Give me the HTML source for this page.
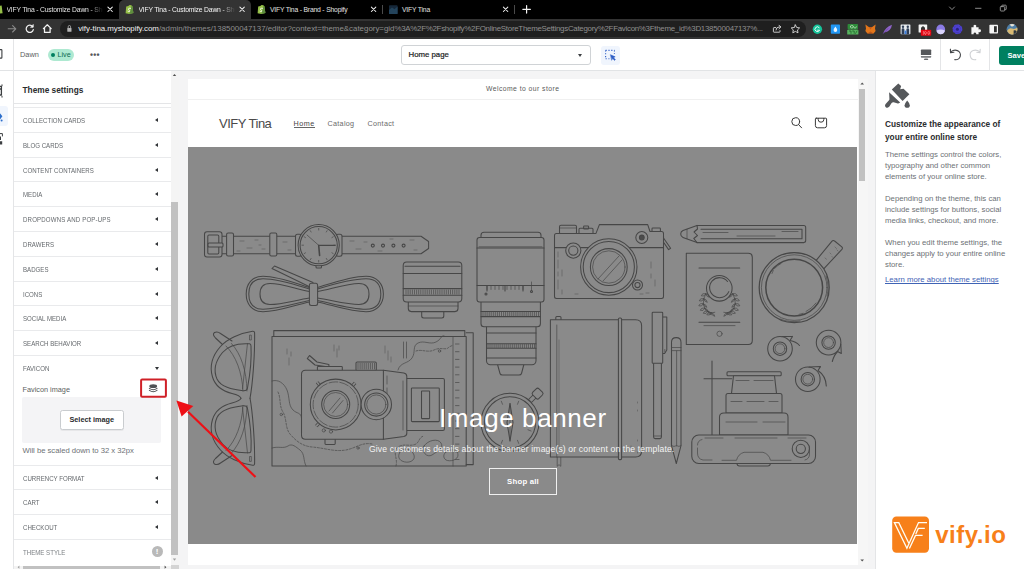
<!DOCTYPE html>
<html lang="en">
<head>
<meta charset="utf-8">
<title>VIFY Tina - Customize Dawn - Shopify</title>
<style>
*{box-sizing:border-box;margin:0;padding:0}
html,body{width:1024px;height:569px;overflow:hidden;background:#f4f4f5;font-family:"Liberation Sans","DejaVu Sans",sans-serif;color:#202223}
.abs,#root>div,#root>svg{position:absolute}
#root{position:relative;width:1024px;height:569px;overflow:hidden}
span.t{position:absolute;white-space:nowrap;display:block}
/* chrome */
#tabs{left:0;top:0;width:1024px;height:19px;background:#000}
#toolbar{left:0;top:18.5px;width:1024px;height:20.5px;background:#333}
#acttab{left:118.5px;top:0;width:132.5px;height:19px;background:#333;border-radius:5px 5px 0 0}
.tt{font-size:6.8px;line-height:19px;top:0;color:#e2e2e2;letter-spacing:-0.19px}
.tx{font-size:9px;line-height:19px;top:0;color:#f2f2f2;font-weight:bold}
.sep{width:1px;height:9px;top:5px;background:#4a4a4a}
#omni{left:60px;top:20.5px;width:746px;height:16.5px;border-radius:8.25px;background:#1f1f1f}
.url{left:78.2px;top:18.8px;height:20px;line-height:20px;font-size:7.9px;color:#8f8f8f;letter-spacing:-0.272px}
.url u{text-decoration:none;letter-spacing:0}
.url b{color:#f0f0f0;font-weight:normal;letter-spacing:-0.03px}
/* shopify top bar */
#topbar{left:0;top:39px;width:1024px;height:32px;background:#fff;border-bottom:1px solid #e1e3e5}
#rail{left:0;top:71px;width:14px;height:498px;background:#fff;border-right:1px solid #e4e5e7}
#side{left:14px;top:71px;width:156.5px;height:498px;background:#fff;overflow:hidden}
#sscroll{left:170.5px;top:71px;width:8.5px;height:498px;background:#f4f4f4}
#right{left:875px;top:71px;width:149px;height:498px;background:#fff;border-left:1px solid #e4e5e7}
#preview{left:188px;top:79px;width:670px;height:486px;background:#fff}
#pscroll{left:858px;top:79px;width:9.5px;height:486px;background:#f6f6f6}
#banner{left:188px;top:147px;width:669px;height:397px;background:#8a8a8a}
.row{position:absolute;left:0;width:157px;height:25px;border-top:1px solid #e9eaec;font-size:6.75px;line-height:25px;color:#65696d;padding-left:8.5px;white-space:nowrap;letter-spacing:0}
.row span{display:inline-block;transform:scaleX(.905);transform-origin:0 50%}
.row i{position:absolute;left:141px;top:9.5px;width:0;height:0;border-style:solid;border-width:2.3px 3.2px 2.3px 0;border-color:transparent #303336 transparent transparent}
.p{font-size:7.75px;line-height:11px;color:#6d7175;left:885px}
</style>
</head>
<body>
<div id="root">
  <!-- browser chrome -->
  <div id="tabs"></div>
  <div id="toolbar"></div>
  <div id="acttab"></div>
  <span class="t tt" style="left:6.5px;width:96px;overflow:hidden;-webkit-mask-image:linear-gradient(90deg,#000 86%,transparent)">VIFY Tina - Customize Dawn - Sho</span>
  <span class="t tt" style="left:138.5px;width:96px;overflow:hidden;color:#f4f4f4;-webkit-mask-image:linear-gradient(90deg,#000 86%,transparent)">VIFY Tina - Customize Dawn - Sho</span>
  <span class="t tt" style="left:270px">VIFY Tina - Brand - Shopify</span>
  <div class="sep" style="left:382px"></div>
  <span class="t tt" style="left:402px">VIFY Tina</span>
  <div class="sep" style="left:514px"></div>
  <div id="omni"></div>
<svg id="chr" style="left:0;top:0" width="1024" height="40" viewBox="0 0 1024 40" fill="none" stroke-linecap="round" stroke-linejoin="round">
<!-- tab favicons -->
<g fill="#95bf47" stroke="none">
<path d="M-3 6.3L1.6 5.4L2.6 13.2L-3 14Z"/>
<path d="M126.2 6.6L128.4 6.1Q129.2 4.6 130.3 5L131.6 5.6L132.4 6.2L133.4 13L129.4 13.9L125.6 13.2Z"/>
<path d="M258.2 6.6L260.4 6.1Q261.2 4.6 262.3 5L263.6 5.6L264.4 6.2L265.4 13L261.4 13.9L257.6 13.2Z"/>
</g>
<path d="M131.6 5.6L132.4 6.2L133.4 13L129.4 13.9Z M263.6 5.6L264.4 6.2L265.4 13L261.4 13.9Z" fill="#5e8e3e"/>
<path d="M130.6 8.3Q128.6 7.6 128.3 9Q128.2 9.8 129.4 10.3Q130.2 10.8 129.6 11.5Q129 11.9 128 11.3M262.6 8.3Q260.6 7.6 260.3 9Q260.2 9.8 261.4 10.3Q262.2 10.8 261.6 11.5Q261 11.9 260 11.3" stroke="#fff" stroke-width=".8"/>
<rect x="389" y="5.3" width="8.6" height="8.6" rx=".8" fill="#16283a"/>
<path d="M389 10L392 7.5L394.5 9.2L397.6 6.5V13.9H389Z" fill="#24445c"/>
<!-- tab close x -->
<g stroke="#f1f1f1" stroke-width="1.05">
<path d="M107.9 7.1L112.3 11.5M112.3 7.1L107.9 11.5"/>
<path d="M239.9 7.1L244.3 11.5M244.3 7.1L239.9 11.5"/>
<path d="M371.4 7.1L375.8 11.5M375.8 7.1L371.4 11.5"/>
<path d="M503.4 7.1L507.8 11.5M507.8 7.1L503.4 11.5"/>
<path d="M522.8 9.3H530.4M526.6 5.5V13.1" stroke-width="1.2"/>
</g>
<!-- window controls -->
<g stroke="#9a9a9a" stroke-width=".9">
<path d="M949.5 7L952 9.6L954.5 7"/>
<path d="M975.5 8.3H981"/>
<rect x="1000.3" y="6.6" width="4.4" height="4.4" rx=".8"/>
<path d="M1001.8 6.4V5.6Q1001.8 5.2 1002.2 5.2H1005.6Q1006.2 5.2 1006.2 5.8V9.2Q1006.2 9.6 1005.8 9.6H1005"/>
</g>
<!-- nav icons -->
<g stroke="#8a8a8a" stroke-width="1.1"><path d="M8.2 28.8H15.6M12.6 25.6L15.8 28.8L12.6 32"/></g>
<g stroke="#f2f2f2" stroke-width="1.25">
<path d="M32.6 26.6A3.6 3.6 0 1 0 33.3 29.6"/>
<path d="M33.2 24.6V27.2H30.6" fill="#f2f2f2" stroke-width=".8"/>
<path d="M43.4 28.6L47.3 24.8L51.2 28.6M44.5 27.8V32.4H50.1V27.8"/>
</g>
<rect x="67.3" y="28" width="4.2" height="3.8" rx=".6" fill="#b5b5b5"/>
<path d="M68.2 28V26.8Q68.2 25.5 69.4 25.5Q70.6 25.5 70.6 26.8V28" stroke="#b5b5b5" stroke-width=".8"/>
<!-- share + star -->
<g stroke="#dcdcdc" stroke-width=".9">
<path d="M775.6 27.6H774Q773.4 27.6 773.4 28.2V31.6Q773.4 32.2 774 32.2H779.4Q780 32.2 780 31.6V30.6M776 30Q776.2 27 779 27H780.6M779 25.2L780.8 27L779 28.8"/>
<path d="M795.4 24.9L796.7 27.5L799.6 27.9L797.5 29.9L798 32.8L795.4 31.4L792.8 32.8L793.3 29.9L791.2 27.9L794.1 27.5Z"/>
</g>
<!-- extensions -->
<circle cx="817.4" cy="29.2" r="4.7" fill="#15c39a"/>
<path d="M819.2 27.6A2.4 2.4 0 1 0 819.6 30.2H817.6" stroke="#fff" stroke-width=".9"/>
<rect x="830.8" y="24.6" width="9.2" height="9.2" rx=".8" fill="#2196f3"/>
<path d="M835.4 26.6Q837.2 29 837.2 30.2A1.8 1.8 0 0 1 833.6 30.2Q833.6 29 835.4 26.6Z" fill="#e8f4ff"/>
<rect x="847.6" y="24" width="10.4" height="5.4" rx=".8" fill="#2e8b3a"/>
<rect x="847.2" y="29.8" width="11.2" height="4.8" rx=".6" fill="#57b35f"/>
<path d="M850.4 26.7A1.4 1.4 0 1 0 853.2 26.7A1.4 1.4 0 1 0 850.4 26.7M853.6 26.7A1.4 1.4 0 1 0 856.4 26.7" stroke="#d8f5d8" stroke-width=".6"/>
<path d="M849.4 31H851V33.4M852.6 31H854.2V33.4M855.6 33.4L857 31" stroke="#134d1b" stroke-width=".6"/>
<path d="M865.4 24.6L868.8 27L872.2 27L875.6 24.6L875 28.6L875.6 31L873.6 33.6L870.5 33.2L867.4 33.6L865.4 31L866 28.6Z" fill="#e2761b"/>
<path d="M868.8 27L870.5 29.6L872.2 27ZM867.4 33.6L870.5 31.4L873.6 33.6Z" fill="#c0581a"/>
<path d="M883.2 33.4Q885 27.6 892 24.8Q891 31.4 884.4 32.4Z" fill="#8e63c8"/>
<path d="M883 33.8L888 28.6" stroke="#5d3b94" stroke-width=".6"/>
<rect x="900.6" y="24.4" width="9.8" height="9.8" rx=".6" fill="#e8ecef"/>
<path d="M901.6 34.2V29.6Q901.6 28.2 903 28.2Q904.4 28.2 904.4 29.6V34.2ZM906.4 34.2V29.6Q906.4 28.2 907.8 28.2Q909.2 28.2 909.2 29.6V34.2Z" fill="#2f3e56"/>
<circle cx="903" cy="26.8" r="1.2" fill="#2f3e56"/><circle cx="907.8" cy="26.8" r="1.2" fill="#2f3e56"/>
<rect x="904.6" y="30.6" width="1.8" height="3.6" fill="#3b7ddd"/>
<rect x="918.6" y="24.4" width="8.6" height="8" rx=".5" fill="#f4f4f4"/>
<path d="M921 30.4V27.8L923 26L925 27.8V30.4Z" fill="#333"/>
<rect x="920.8" y="29.8" width="10.4" height="6" rx=".8" fill="#e30613"/>
<path d="M923.4 31.4V34.4M925.4 34.4A1 1.5 0 1 0 925.4 31.4A1 1.5 0 1 0 925.4 34.4M928.8 34.4A1 1.5 0 1 0 928.8 31.4A1 1.5 0 1 0 928.8 34.4" stroke="#ffb3b3" stroke-width=".5"/>
<ellipse cx="940.7" cy="29.4" rx="4.4" ry="4.9" fill="#8b7be6"/>
<path d="M936.5 30.6Q940.7 28.6 944.9 30.6Q944.4 34.3 940.7 34.3Q937 34.3 936.5 30.6Z" fill="#d9d4fb"/>
<circle cx="957.4" cy="29.2" r="3.5" fill="#4c3fd0"/>
<circle cx="957.4" cy="29.2" r="4.1" stroke="#4c3fd0" stroke-width="1.7" stroke-dasharray="1.6 1.62"/>
<circle cx="957.4" cy="29.2" r="1.5" fill="#2a2280"/>
<path d="M971.4 27.2H973.6Q973 24.8 974.9 24.8Q976.8 24.8 976.2 27.2H978.6V29.4Q981 28.8 981 30.7Q981 32.6 978.6 32V34.2H976.2Q976.6 32.4 974.9 32.4Q973.2 32.4 973.6 34.2H971.4Z" fill="#f4f4f4"/>
<rect x="989.4" y="24.8" width="8.6" height="8.8" rx=".8" fill="#f4f4f4"/>
<rect x="994" y="26.2" width="2.8" height="6" fill="#2e2e2e"/>
<circle cx="1012" cy="29.2" r="5.4" fill="#4f7fa8"/>
<path d="M1007 31Q1009 27.4 1012 28.6Q1015 29.6 1017.2 27.6A5.4 5.4 0 0 1 1009 33.6Z" fill="#d9b972"/>
<path d="M1009.4 24.6Q1012 23.4 1014.6 24.6Q1013.6 26.8 1011.6 26.4Z" fill="#e9e4d6"/>
<path d="M1013.6 30.4Q1016 30 1016.8 31.6Q1015.6 33.6 1013.6 34.2Z" fill="#2b3540"/>
</svg>

  <span class="t url" id="url"><b id="host">vify-tina.myshopify.com</b><u>/admin/themes/138500047137/editor?context=theme&amp;category=gid</u>%3A%2F%2Fshopify%2FOnlineStoreThemeSettingsCategory%2FFavicon%3Ftheme_id%3D138500047137%...</span>

  <!-- editor top bar -->
  <div id="topbar"></div>
  <span class="t" style="left:20px;top:49px;font-size:7.4px;line-height:11px;color:#5c5f62">Dawn</span>
  <div style="left:48px;top:48.5px;width:26px;height:12px;border-radius:6px;background:#aee9d1"></div>
  <div style="left:51px;top:52.5px;width:4px;height:4px;border-radius:2px;background:#007f5f"></div>
  <span class="t" style="left:57.5px;top:49px;font-size:7.2px;line-height:11px;color:#0b6b50">Live</span>
  <span class="t" style="left:90px;top:49.8px;font-size:8.6px;line-height:11px;color:#55585b;font-weight:bold;letter-spacing:0.3px">•••</span>
  <div style="left:401px;top:45px;width:190px;height:20px;border:1px solid #d0d3d6;border-radius:3px;background:#fff"></div>
  <span class="t" style="left:408.5px;top:49px;font-size:7.8px;line-height:12px;color:#202223;-webkit-text-stroke:.2px #202223">Home page</span>
  <div style="left:577.5px;top:53.5px;width:0;height:0;border-style:solid;border-width:3px 2.7px 0 2.7px;border-color:#3c3f42 transparent transparent transparent"></div>
  <div style="left:600.5px;top:45.5px;width:19.5px;height:19px;border-radius:3px;background:#f0f5fd"></div>
  <div style="left:13px;top:39px;width:1px;height:32px;background:#e4e5e7"></div>
  <div style="left:940px;top:39px;width:1px;height:32px;background:#e4e5e7"></div>
  <div style="left:989px;top:39px;width:1px;height:32px;background:#e4e5e7"></div>
  <div style="left:999px;top:45.5px;width:30px;height:19px;border-radius:3px;background:#008060"></div>
  <span class="t" style="left:1007.5px;top:49.5px;font-size:7.6px;line-height:11px;color:#fff;font-weight:bold">Save</span>

  <!-- left rail + sidebar -->
  <div id="rail"></div>
  <div style="left:0;top:106px;width:8px;height:20px;background:#f0f5fd;border-radius:0 3px 3px 0"></div>
  <div id="side">
    <span class="t" style="left:8.5px;top:13px;font-size:8.3px;line-height:13px;font-weight:bold;color:#2a2c2e">Theme settings</span>
    <div class="abs" style="left:0;top:32px;width:157px;height:1px;background:#e4e5e7"></div>
<div class="row" style="top:36px"><span>COLLECTION CARDS</span><i></i></div>
<div class="row" style="top:61px"><span>BLOG CARDS</span><i></i></div>
<div class="row" style="top:86px"><span>CONTENT CONTAINERS</span><i></i></div>
<div class="row" style="top:110px"><span>MEDIA</span><i></i></div>
<div class="row" style="top:135px"><span style="letter-spacing:.17px">DROPDOWNS AND POP-UPS</span><i></i></div>
<div class="row" style="top:160px"><span>DRAWERS</span><i></i></div>
<div class="row" style="top:185px"><span>BADGES</span><i></i></div>
<div class="row" style="top:210px"><span>ICONS</span><i></i></div>
<div class="row" style="top:234px"><span>SOCIAL MEDIA</span><i></i></div>
<div class="row" style="top:259px"><span>SEARCH BEHAVIOR</span><i></i></div>
<div class="row" style="top:394px"><span>CURRENCY FORMAT</span><i></i></div>
<div class="row" style="top:418px"><span>CART</span><i></i></div>
<div class="row" style="top:443px"><span>CHECKOUT</span><i></i></div>

    <div class="row" style="top:284px"><span>FAVICON</span><i style="left:141.3px;top:10.5px;border-width:3px 2.5px 0 2.5px;border-color:#303336 transparent transparent transparent"></i></div>
    <span class="t" style="left:8.5px;top:312.5px;font-size:7.3px;line-height:11px;color:#5c5f62">Favicon image</span>
    <div class="abs" style="left:8px;top:326px;width:139px;height:46px;background:#f4f4f6;border-radius:2px"></div>
    <div class="abs" style="left:46px;top:339px;width:63.5px;height:20px;background:#fff;border:1px solid #c9cccf;border-radius:2.5px;box-shadow:0 1px 0 rgba(0,0,0,.05)"></div>
    <span class="t" style="left:46px;top:342.7px;width:63.5px;text-align:center;font-size:7.3px;line-height:11px;font-weight:bold;color:#2a2c2e">Select image</span>
    <span class="t" style="left:8.5px;top:374px;font-size:7.7px;line-height:11px;color:#6d7175;letter-spacing:-0.02px">Will be scaled down to 32 x 32px</span>
    <div class="row" style="top:468px;color:#7d8185"><span>THEME STYLE</span></div>
    <div class="abs" style="left:137.7px;top:475px;width:11px;height:11px;border-radius:6px;background:#b9b9b9"></div>
    <span class="t" style="left:137.7px;top:475px;width:11px;text-align:center;font-size:8px;line-height:11px;font-weight:bold;color:#fff">!</span>
    <div class="abs" style="left:0;top:494.5px;width:157px;height:4px;background:#f3f3f3"></div>
    <div class="abs" style="left:9px;top:495px;width:137px;height:4px;background:#c1c1c1"></div>
  </div>
  <div id="sscroll"></div>
  <div style="left:171px;top:201.500px;width:7px;height:353px;background:#c1c1c1"></div>
  <div style="left:171px;top:565px;width:8px;height:4px;background:#d4d4d4"></div>
  <div id="preview"></div>
  <div id="pscroll"></div>
  <div style="left:858.600px;top:88.600px;width:6.800px;height:92.200px;background:#c1c1c1"></div>
  <div id="banner"></div>
<svg id="art" style="left:0;top:0" width="1024" height="569" viewBox="0 0 1024 569" fill="none" stroke="#474747" stroke-width="1.05" stroke-linejoin="round" stroke-linecap="round">
<style>#art .th{stroke-width:.7}#art .f{fill:#8a8a8a}#art .lt{stroke:#5e5e5e;stroke-width:.7}</style>
<g>
<path d="M219 236.3H298V253.8H219" />
<path d="M341 236.3H421L428.6 241.5V248.5L421 253.8H341" />
<rect x="204.5" y="231.7" width="17.5" height="25.3" rx="2.5" class="f"/>
<rect x="207.8" y="235.0" width="11.0" height="19.0" rx="1.2" />
<rect x="208.0" y="243.0" width="15.0" height="4.0" rx="1" class="f"/>
<rect x="226.6" y="233.0" width="6.9" height="23.0" rx="1.5" class="f"/>
<rect x="269.8" y="233.0" width="7.0" height="23.0" rx="1.5" class="f"/>
<rect x="295.5" y="234.3" width="6.0" height="22.0" rx="2" class="f"/>
<rect x="336.0" y="234.3" width="6.0" height="22.0" rx="2" class="f"/>
<rect x="316.0" y="264.0" width="5.5" height="4.0" rx="1" class="f"/>
<circle cx="318.7" cy="245.2" r="20.6" class="f"/>
<circle cx="318.7" cy="245.2" r="18.6" />
<path d="M333.9 245.2L335.5 245.2M331.9 252.8L333.2 253.6M326.3 258.4L327.1 259.7M318.7 260.4L318.7 262.0M311.1 258.4L310.3 259.7M305.5 252.8L304.2 253.6M303.5 245.2L301.9 245.2M305.5 237.6L304.2 236.8M311.1 232.0L310.3 230.7M318.7 230.0L318.7 228.4M326.3 232.0L327.1 230.7M331.9 237.6L333.2 236.8" class="th"/>
<path d="M318.7 245.5L319.6 255.5" stroke-width="1.6"/>
<path d="M318.7 245.3H335" stroke-width="1.3"/>
<path d="M318.7 245.3L307 235" class="th"/>
<circle cx="372.8" cy="245.6" r="1.5" stroke-width="1.1"/>
<circle cx="383.0" cy="245.6" r="1.5" stroke-width="1.1"/>
<circle cx="393.4" cy="245.6" r="1.5" stroke-width="1.1"/>
<circle cx="403.6" cy="245.6" r="1.5" stroke-width="1.1"/>
<path d="M240 241h4M247 248h5M255 240h3M262 249h3M283 242h4M288 250h3M350 241h4M356 249h5M364 242h3M410 240h4M414 250h3M390 239h3M378 251h4M237 251h3M259 245h2" class="lt"/>
</g>
<g>
<path d="M310 287L272 268.5L274.5 266L313 282.5" />
<path d="M309.5 287.5C295 283.0 278 276.2 263 276.2C252 276.2 246.2 284.0 246.2 294C246.2 304.0 252 311.8 263 311.8C278 311.8 295 305.0 309.5 302.0" />
<path d="M317.5 287.5C332 283.0 351 276.2 366 276.2C377 276.2 383.4 284.0 383.4 294C383.4 304.0 377 311.8 366 311.8C351 311.8 332 305.0 317.5 302.0" />
<path d="M309.5 289.1C295 284.6 278 278.8 263 278.8C252 278.8 248.8 285.0 248.8 294C248.8 303.0 252 309.2 263 309.2C278 309.2 295 303.4 309.5 300.4" />
<path d="M317.5 289.1C332 284.6 351 278.8 366 278.8C377 278.8 380.8 285.0 380.8 294C380.8 303.0 377 309.2 366 309.2C351 309.2 332 303.4 317.5 300.4" />
<path d="M309.5 291.5C296 289 282 283.5 270 283.5C263 283.5 260 288 260 294C260 300 263 304.5 270 304.5C282 304.5 296 300 309.5 298" />
<path d="M317.5 291.5C331 289 347 283.5 359 283.5C366 283.5 369 288 369 294C369 300 366 304.5 359 304.5C347 304.5 331 300 317.5 298" />
<rect x="309.4" y="283.2" width="8.2" height="22.2" rx="2" class="f"/>
</g>
<g>
<rect x="421.7" y="309.0" width="22.1" height="9.0" rx="2" class="f"/>
<rect x="408.3" y="296.0" width="49.7" height="15.6" rx="3" class="f"/>
<rect x="403.2" y="262.0" width="58.6" height="40.0" rx="3.5" class="f"/>
<path d="M405 266.3H460M403.2 273.5H461.8M403.2 288.6H461.8M403.2 295.2H461.8" />
<path d="M406.0 290.0V294.0M408.1 290.0V294.0M410.2 290.0V294.0M412.4 290.0V294.0M414.5 290.0V294.0M416.6 290.0V294.0M418.7 290.0V294.0M420.8 290.0V294.0M423.0 290.0V294.0M425.1 290.0V294.0M427.2 290.0V294.0M429.3 290.0V294.0M431.4 290.0V294.0M433.6 290.0V294.0M435.7 290.0V294.0M437.8 290.0V294.0M439.9 290.0V294.0M442.0 290.0V294.0M444.2 290.0V294.0M446.3 290.0V294.0M448.4 290.0V294.0M450.5 290.0V294.0M452.6 290.0V294.0M454.8 290.0V294.0M456.9 290.0V294.0M459.0 290.0V294.0" class="th"/>
<path d="M408.3 306H458" class="th"/>
</g>
<g>
<path d="M497.4 364H524L521.5 373.5Q521 375 519 375H502.4Q500.4 375 500 373.5Z" class="f"/>
<rect x="486.5" y="320.0" width="49.5" height="44.8" rx="4" class="f"/>
<rect x="481.0" y="298.0" width="59.4" height="28.7" rx="3" class="f"/>
<rect x="481.0" y="232.3" width="60.0" height="9.7" rx="3" class="f"/>
<rect x="477.0" y="237.4" width="67.0" height="64.6" rx="2.5" class="f"/>
<path d="M477 248H544M477 285.4H544" />
<path d="M479 246.8H542" class="th"/>
<path d="M487.0 285.4V289.4M491.0 285.4V289.4M495.0 285.4V289.4M499.0 285.4V289.4M503.0 285.4V289.4M507.0 285.4V289.4M511.0 285.4V289.4M515.0 285.4V289.4M519.0 285.4V289.4M523.0 285.4V289.4" class="th"/>
<path d="M487 285.4V291M505 285.4V291M523 285.4V291" />
<circle cx="486.0" cy="294.0" r="1.0" />
<circle cx="531.5" cy="291.5" r="1.0" />
<path d="M531.5 282V290.5" class="th"/>
<path d="M481 311.4H540.4M481 316.6H540.4" />
<path d="M483.0 312.3V315.8M485.1 312.3V315.8M487.1 312.3V315.8M489.2 312.3V315.8M491.2 312.3V315.8M493.3 312.3V315.8M495.3 312.3V315.8M497.4 312.3V315.8M499.4 312.3V315.8M501.5 312.3V315.8M503.6 312.3V315.8M505.6 312.3V315.8M507.7 312.3V315.8M509.7 312.3V315.8M511.8 312.3V315.8M513.8 312.3V315.8M515.9 312.3V315.8M517.9 312.3V315.8M520.0 312.3V315.8M522.1 312.3V315.8M524.1 312.3V315.8M526.2 312.3V315.8M528.2 312.3V315.8M530.3 312.3V315.8M532.3 312.3V315.8M534.4 312.3V315.8M536.4 312.3V315.8M538.5 312.3V315.8" class="th"/>
<path d="M486.5 333H536M486.5 343.7H536M486.5 348.3H536M486.5 358H536" />
<path d="M488.0 344.5V347.6M490.0 344.5V347.6M492.0 344.5V347.6M494.1 344.5V347.6M496.1 344.5V347.6M498.1 344.5V347.6M500.1 344.5V347.6M502.2 344.5V347.6M504.2 344.5V347.6M506.2 344.5V347.6M508.2 344.5V347.6M510.2 344.5V347.6M512.3 344.5V347.6M514.3 344.5V347.6M516.3 344.5V347.6M518.3 344.5V347.6M520.3 344.5V347.6M522.4 344.5V347.6M524.4 344.5V347.6M526.4 344.5V347.6M528.4 344.5V347.6M530.5 344.5V347.6M532.5 344.5V347.6M534.5 344.5V347.6" class="th"/>
</g>
<g>
<path d="M663.5 238L670.6 248.3L668.6 249.6L662 240" />
<rect x="559.5" y="225.2" width="17.0" height="8.8" rx="1.5" class="f"/>
<path d="M559.5 228H576.5" class="th"/>
<rect x="583.6" y="226.0" width="5.0" height="3.0" rx="0.8" />
<rect x="579.0" y="228.3" width="14.0" height="5.7" rx="1" />
<rect x="652.0" y="228.0" width="8.4" height="5.0" rx="0.8" />
<path d="M554.5 235.4Q554.5 233.4 556.5 233.4H596L599.4 224.6H647.7L650 231.5H661.5Q663.5 231.5 663.5 233.5V296.5Q663.5 298.5 661.5 298.5H556.5Q554.5 298.5 554.5 296.5Z" class="f"/>
<path d="M554.5 247.6H663.5" />
<circle cx="573.3" cy="250.6" r="7.6" class="f"/>
<circle cx="573.3" cy="250.6" r="4.6" />
<circle cx="641.8" cy="237.5" r="6.0" class="f"/>
<circle cx="641.8" cy="237.5" r="2.4" fill="#4c4c4c"/>
<circle cx="608.8" cy="267.0" r="28.2" class="f"/>
<circle cx="608.8" cy="267.0" r="25.6" />
<circle cx="608.8" cy="267.0" r="18.4" />
<circle cx="608.8" cy="267.0" r="16.2" class="th"/>
<path d="M598 279L619 256M603 281L622 260" class="th"/>
<circle cx="637.5" cy="285.0" r="5.0" class="f"/>
<circle cx="637.5" cy="285.0" r="2.6" />
<path d="M558 252v5M558 260v8M558 272v4M558 280v9M562 270v6M562 290v4M651 262v6M651 274v4M655 280v6M646 293h3M640 294h3M575 294h3" class="lt"/>
</g>
<g>
<path d="M697 225.4H803.7Q805.7 225.4 805.7 227.4V240.6Q805.7 242.6 803.7 242.6H697L693.8 238.5L697.5 235.5L694 232L697.5 229Z" />
<path d="M697 225.4L683 230.6Q680.7 231.6 680.7 234Q680.7 236.5 683 237.4L697 242.6" />
<path d="M687 229.3V238.7" class="th"/>
<path d="M701 229.2H802V238.8H701" />
<path d="M703 232.5H728M737 236H775M782 231.5H798" class="th"/>
</g>
<g>
<path d="M686.3 253.3H748.3Q752.3 253.3 752.3 257.3V340.4Q752.3 344.4 748.3 344.4H686.3Z" />
<path d="M699 268H739.7M699 322.3H739.8" />
<path d="M704 325.6H735" class="th"/>
<circle cx="719.5" cy="333.8" r="2.6" class="th"/>
<circle cx="719.3" cy="288.3" r="12.8" />
<path d="M727.5 281.5A10 10 0 1 0 728.8 291.6" />
<path d="M705.8 293.8 L703.8 298.8 L703.3 303.8 L704.8 308.3 L707.8 311.3 L711.3 312.8 L714.8 312.3" class="th"/>
<path d="M705.8 293.8q-3.5 -1 -4.5 2q3.0 1.5 4.5 -2M705.8 293.8q3.0 0.5 3.5 3.5q-3.0 -0.5 -3.5 -3.5" class="th"/>
<path d="M703.8 298.8q-3.5 -1 -4.5 2q3.0 1.5 4.5 -2M703.8 298.8q3.0 0.5 3.5 3.5q-3.0 -0.5 -3.5 -3.5" class="th"/>
<path d="M703.3 303.8q-3.5 -1 -4.5 2q3.0 1.5 4.5 -2M703.3 303.8q3.0 0.5 3.5 3.5q-3.0 -0.5 -3.5 -3.5" class="th"/>
<path d="M704.8 308.3q-3.5 -1 -4.5 2q3.0 1.5 4.5 -2M704.8 308.3q3.0 0.5 3.5 3.5q-3.0 -0.5 -3.5 -3.5" class="th"/>
<path d="M707.8 311.3q-3.5 -1 -4.5 2q3.0 1.5 4.5 -2M707.8 311.3q3.0 0.5 3.5 3.5q-3.0 -0.5 -3.5 -3.5" class="th"/>
<path d="M711.3 312.8q-3.5 -1 -4.5 2q3.0 1.5 4.5 -2M711.3 312.8q3.0 0.5 3.5 3.5q-3.0 -0.5 -3.5 -3.5" class="th"/>
<path d="M732.8 293.8 L734.8 298.8 L735.3 303.8 L733.8 308.3 L730.8 311.3 L727.3 312.8 L723.8 312.3" class="th"/>
<path d="M732.8 293.8q3.5 -1 4.5 2q-3.0 1.5 -4.5 -2M732.8 293.8q-3.0 0.5 -3.5 3.5q3.0 -0.5 3.5 -3.5" class="th"/>
<path d="M734.8 298.8q3.5 -1 4.5 2q-3.0 1.5 -4.5 -2M734.8 298.8q-3.0 0.5 -3.5 3.5q3.0 -0.5 3.5 -3.5" class="th"/>
<path d="M735.3 303.8q3.5 -1 4.5 2q-3.0 1.5 -4.5 -2M735.3 303.8q-3.0 0.5 -3.5 3.5q3.0 -0.5 3.5 -3.5" class="th"/>
<path d="M733.8 308.3q3.5 -1 4.5 2q-3.0 1.5 -4.5 -2M733.8 308.3q-3.0 0.5 -3.5 3.5q3.0 -0.5 3.5 -3.5" class="th"/>
<path d="M730.8 311.3q3.5 -1 4.5 2q-3.0 1.5 -4.5 -2M730.8 311.3q-3.0 0.5 -3.5 3.5q3.0 -0.5 3.5 -3.5" class="th"/>
<path d="M727.3 312.8q3.5 -1 4.5 2q-3.0 1.5 -4.5 -2M727.3 312.8q-3.0 0.5 -3.5 3.5q3.0 -0.5 3.5 -3.5" class="th"/>
</g>
<g>
<path d="M816.2 260.3L832 241.2Q833.2 239.8 834.6 241L841.8 246.9Q843 248 841.9 249.4L823.7 268.8" class="f"/>
<path d="M835 247l1.5 1.5M830 253l1 1M825 258l1.5 1.2M832 256.5l1 1M837 250l1 1" class="lt"/>
<circle cx="794.2" cy="287.6" r="35.0" class="f" stroke-width="1.25"/>
<circle cx="794.2" cy="287.6" r="32.8" class="th"/>
<circle cx="794.2" cy="287.6" r="28.4" stroke-width="1.5"/>
<path d="M774.5 268.5A27 27 0 0 1 781 263.5M772 273.5A27 27 0 0 1 773.3 270.5" class="th"/>
<path d="M816 303A27 27 0 0 1 806 311.5M803 313.3A27 27 0 0 1 799 314.4" class="th"/>
<path d="M826 276A34 34 0 0 1 827 296M780 319A34 34 0 0 0 800 321" class="th"/>
</g>
<g>
<path d="M222.5 344.5L215.5 338.0Q212.0 334.5 214.5 332.5Q217.5 331.0 220.5 333.5L232.0 341.0" />
<path d="M226.0 346.0C236.0 356.0 242.0 372.0 243.0 391.0" class="th"/>
<path d="M231.5 343.5C241.0 354.0 246.5 370.0 247.0 391.0" class="th"/>
<path d="M247.5 343.5L242.5 389.0" class="th"/>
<path d="M254.6 333.0Q254.6 331.0 252.6 331.2C240.0 333.0 227.0 339.0 220.5 346.5C212.0 356.0 209.5 367.0 212.5 377.0C215.5 387.0 224.0 391.5 232.0 393.5C237.0 394.7 240.5 396.5 241.0 398.3" />
<path d="M254.6 333.0C255.0 355.0 252.5 385.0 250.0 398.3" />
<path d="M249.5 343.8C238.0 343.0 228.0 346.0 222.5 352.5C215.0 361.5 213.5 371.0 217.0 379.0C221.0 387.5 233.0 389.5 243.0 390.8Q247.0 391.2 247.5 388.0C250.5 372.0 251.5 355.0 251.0 346.0Q251.0 344.0 249.5 343.8" />
<path d="M249.5 335.5V340.0H251.3V335.5Z" class="th"/>
<path d="M222.5 452.0L215.5 458.5Q212.0 462.0 214.5 464.0Q217.5 465.5 220.5 463.0L232.0 455.5" />
<path d="M226.0 450.5C236.0 440.5 242.0 424.5 243.0 405.5" class="th"/>
<path d="M231.5 453.0C241.0 442.5 246.5 426.5 247.0 405.5" class="th"/>
<path d="M247.5 453.0L242.5 407.5" class="th"/>
<path d="M254.6 463.5Q254.6 465.5 252.6 465.3C240.0 463.5 227.0 457.5 220.5 450.0C212.0 440.5 209.5 429.5 212.5 419.5C215.5 409.5 224.0 405.0 232.0 403.0C237.0 401.8 240.5 400.0 241.0 398.2" />
<path d="M254.6 463.5C255.0 441.5 252.5 411.5 250.0 398.2" />
<path d="M249.5 452.7C238.0 453.5 228.0 450.5 222.5 444.0C215.0 435.0 213.5 425.5 217.0 417.5C221.0 409.0 233.0 407.0 243.0 405.7Q247.0 405.3 247.5 408.5C250.5 424.5 251.5 441.5 251.0 450.5Q251.0 452.5 249.5 452.7" />
<path d="M249.5 461.0V456.5H251.3V461.0Z" class="th"/>
</g>
<g>
<path d="M272 466V336.4H466.200V466Z" />
<path d="M273.800 336.4V330.600H464.800V336.400" />
<path d="M466.200 332.800H473.200V464.600H466.200" />
<path d="M453 336.400V466" class="th"/>
<path d="M455.5 344.0H459.0M455.5 351.7H459.0M455.5 359.4H459.0M455.5 367.1H459.0M455.5 374.8H459.0M455.5 382.5H459.0M455.5 390.2H459.0M455.5 397.9H459.0M455.5 405.6H459.0M455.5 413.3H459.0M455.5 421.0H459.0M455.5 428.7H459.0M455.5 436.4H459.0M455.5 444.1H459.0M455.5 451.8H459.0M455.5 459.5H459.0" class="th"/>
<path d="M272 381C278 379 284 383 287 390C290 398 288 405 293 410C297 414 301 412 301.5 418" class="th"/>
<path d="M272 448C278 446 283 449 288 446C292 443 296 447 300 450C305 454 303 460 306 466" class="th"/>
<path d="M398 370C400 362 408 364 412 358C416 352 412 346 418 343C424 340 430 345 436 342C442 339 440 335.8 444 335.8" class="th"/>
<path d="M416 351C422 349 428 353 434 350C440 347 446 350 448 348C450 346 452 346 453 345" class="th" stroke-dasharray="2 1.5"/>
<path d="M278 392C281 398 279 406 283 412C287 419 285 428 290 434C296 441 302 446 312 447C325 448 334 452 346 450C356 448 362 442 372 444" class="th" stroke-dasharray="2 1.6"/>
<path d="M396 466C398 458 392 452 398 447C404 443 410 447 416 444C420 441 419 437 424 436" class="th" stroke-dasharray="2 1.6"/>
<path d="M400 452C404 447 412 449 414 455C416 461 408 464 402 461C398 459 398 455 400 452Z" class="th"/>
<path d="M424 446C428 440 438 438 441 443C444 448 438 451 432 455C427 458 421 452 424 446Z" class="th"/>
<path d="M446 452C452 448 458 450 458 455C458 460 450 462 446 460C443 458 443 454 446 452Z" class="th"/>
<circle cx="281.3" cy="414.5" r="1.2" class="th"/>
<circle cx="358.0" cy="448.0" r="1.2" class="th"/>
<circle cx="439.5" cy="351.0" r="1.2" class="th"/>
<path d="M287 349v5M289 358v7M291 352v4M334 345v6M337 349v8M339 346v4M385 346v7M388 351v9M391 357v5" class="lt"/>
<path d="M403.5 342V358M406.5 342V358" class="th"/>
<path d="M309.5 355.5L307.3 358.5L315 365L328.9 367V364.5L317 362Z" class="f"/>
<rect x="317.4" y="366.4" width="24.9" height="4.4" rx="0.8" class="f"/>
<rect x="356.0" y="361.9" width="20.3" height="8.9" rx="1.2" class="f"/>
<path d="M358.0 363.4V369.0M360.1 363.4V369.0M362.1 363.4V369.0M364.2 363.4V369.0M366.2 363.4V369.0M368.3 363.4V369.0M370.4 363.4V369.0M372.4 363.4V369.0M374.5 363.4V369.0" class="th"/>
<rect x="325.0" y="438.0" width="10.2" height="6.4" rx="0.8" class="f"/>
<rect x="404.0" y="378.4" width="40.4" height="52.0" rx="1.5" class="f"/>
<rect x="411.4" y="388.0" width="27.9" height="33.6" rx="0.8" />
<rect x="421.5" y="391.0" width="8.1" height="27.6" rx="0.5" />
<path d="M305.5 370.3H383.4L403.8 373Q406.8 373.6 406.8 376.5V433.3Q406.8 436 403.8 436.6L383.4 439.3H305.5Q301.5 439.3 301.5 435.3V374.3Q301.5 370.3 305.5 370.3Z" class="f"/>
<path d="M383.4 370.3V439.3" />
<path d="M387 376V384M387 388V396" class="th"/>
<path d="M403 381V430" class="th"/>
<path d="M319.6 385.3L317.1 382.3" stroke-width="3.2" stroke-linecap="butt"/>
<path d="M319.6 385.3L317.1 382.3" stroke-width="1.6" stroke="#8a8a8a" stroke-linecap="butt"/>
<path d="M352.4 385.9L355.1 382.9" stroke-width="3.2" stroke-linecap="butt"/>
<path d="M352.4 385.9L355.1 382.9" stroke-width="1.6" stroke="#8a8a8a" stroke-linecap="butt"/>
<path d="M319.0 423.1L316.3 426.1" stroke-width="3.2" stroke-linecap="butt"/>
<path d="M319.0 423.1L316.3 426.1" stroke-width="1.6" stroke="#8a8a8a" stroke-linecap="butt"/>
<circle cx="335.7" cy="404.5" r="25.4" class="f"/>
<circle cx="335.7" cy="404.5" r="22.6" class="th" stroke-dasharray="9 2"/>
<circle cx="335.7" cy="404.5" r="14.0" />
<circle cx="335.7" cy="404.5" r="12.0" class="th"/>
<path d="M329 411L340 398M332.5 413L343 400.5" class="th"/>
<circle cx="376.3" cy="404.5" r="15.2" class="f"/>
<circle cx="376.3" cy="404.5" r="11.6" />
<circle cx="376.3" cy="404.5" r="9.6" class="th"/>
<circle cx="323.8" cy="430.4" r="1.6" class="th"/>
<circle cx="331.0" cy="431.6" r="1.6" class="th"/>
</g>
<g>
<rect x="555.8" y="316.5" width="5.2" height="4.5" rx="1" />
<path d="M557.2 452V466.3L559 464.6L560.8 466.3V452" class="th"/>
<path d="M550.4 319.8H635.6Q641.6 319.8 641.6 325.8V451Q641.6 457 635.6 457H550.4Z" class="f"/>
<path d="M556.8 325V457" class="th"/>
<path d="M559 340V450" class="lt"/>
<rect x="618.4" y="318.0" width="3.2" height="141.6" rx="1.2" class="f"/>
<path d="M637.5 402v1M637.5 410v1M637.5 440v1M631 446v1M627 446v1M637.5 452v1" class="lt"/>
</g>
<g>
<path d="M528.5 399.5L533.5 394.5L536.5 397.5L531.5 402.5Z" class="f"/>
<path d="M532.8 392.2L536.2 388.8Q537.6 387.4 539 388.8L542.4 392.2Q543.8 393.6 542.4 395L539 398.4Q537.6 399.8 536.2 398.4L532.8 395Q531.4 393.6 532.8 392.2Z" class="f"/>
<circle cx="510.0" cy="422.3" r="29.0" class="f"/>
<circle cx="510.0" cy="422.3" r="25.6" />
<path d="M510 403.5L513 422.3L510 441L507 422.3Z" />
<path d="M510 403.5V441" class="th"/>
<path d="M528.0 429.8L531.1 431.0M517.5 440.3L518.7 443.4M502.5 440.3L501.3 443.4M492.0 429.8L488.9 431.0M492.0 414.8L488.9 413.6M502.5 404.3L501.3 401.2M517.5 404.3L518.7 401.2M528.0 414.8L531.1 413.6" class="th"/>
</g>
<g>
<path d="M653.6 363V437Q653.6 438.6 655.2 438.6H659.8Q661.4 438.6 661.4 437V363" />
<path d="M653.6 436H661.4" class="th"/>
<path d="M662.7 317H666.8V350L664.6 353.5H662.7" class="f"/>
<path d="M664.8 349.5V352" class="th"/>
<rect x="652.2" y="312.2" width="10.5" height="51.0" rx="0.8" class="f"/>
<path d="M671.5 342.3Q671.5 337.6 676.2 337.6Q681 337.6 681 342.3V445.6L676.3 463.5L671.5 445.6Z" class="f"/>
<path d="M671.5 347.5H681M671.5 350.6H681M676.6 351V446" class="th"/>
<path d="M671.5 445.6Q674 447.4 676.6 445.6Q679 447.4 681 445.6" class="th"/>
</g>
<g>
<circle cx="780.0" cy="348.7" r="12.3" class="f"/>
<circle cx="780.0" cy="348.7" r="6.7" />
<circle cx="780.0" cy="348.7" r="4.9" class="th"/>
<path d="M782 336.6L792.5 336.4L790 340.5Q796 341.5 799.5 345.5" />
<circle cx="828.6" cy="342.6" r="12.3" class="f"/>
<circle cx="828.6" cy="342.6" r="6.7" />
<circle cx="828.6" cy="342.6" r="4.9" class="th"/>
<path d="M840.8 344L841.3 353.5L837.6 351.5Q834 355 832.3 361.5" />
<circle cx="807.8" cy="379.2" r="12.3" class="f"/>
<circle cx="807.8" cy="379.2" r="6.7" />
<circle cx="807.8" cy="379.2" r="4.9" class="th"/>
<path d="M809 367L820.5 366.6L818 370.5Q826 376 826.3 386" />
</g>
<g>
<path d="M712 361V435M704 378.7H731.7" />
<rect x="727.0" y="371.8" width="54.2" height="3.9" rx="1" class="f"/>
<path d="M733.5 375.7H774.5L776.5 393.4H731.5Z" class="f"/>
<path d="M728 393.4H780Q782 393.4 782 395.4V413H726V395.4Q726 393.4 728 393.4Z" class="f"/>
<path d="M724 413H784Q788 413 788 417V435H719.5V417Q719.5 413 724 413Z" class="f"/>
<path d="M736 380.5H749M754 380.5H773M731 401.5H742M747 401.5H764M769 401.5H778M726 422H757M763 422H785" class="th"/>
<rect x="737.0" y="452.0" width="33.3" height="14.0" rx="2.5" class="f"/>
<rect x="691.8" y="435.0" width="123.7" height="28.5" rx="7" class="f"/>
<path d="M705 438H723M735 438H777M788 438H806M697.5 445Q697.5 440.5 702 439.5M697.5 448V453Q697.5 459 703 460H712M722 460.3H736.5Q738 454 744 452.3H763Q769 454 770.5 460.3H791M809.5 446V454Q809.5 459 805 460" class="th"/>
<circle cx="800.8" cy="448.8" r="8.6" />
<circle cx="800.8" cy="448.8" r="4.6" />
</g>
</svg>
  <!-- preview header -->
  <span class="t" id="welcome" style="left:486px;top:82.8px;font-size:6.8px;line-height:11px;color:#5a5a5a;letter-spacing:0.45px">Welcome to our store</span>
  <div style="left:188px;top:99px;width:670px;height:1px;background:#f0f0f0"></div>
  <span class="t" id="logo" style="left:219px;top:114.5px;font-size:13px;line-height:18px;color:#4a4a4a;letter-spacing:-0.5px">VIFY Tina</span>
  <span class="t" id="nav1" style="left:293.5px;top:118px;font-size:7.2px;line-height:11px;color:#444;letter-spacing:0.5px;border-bottom:0.7px solid #666;height:9.6px;line-height:10px;margin-top:.5px">Home</span>
  <span class="t" id="nav2" style="left:327.5px;top:118px;font-size:7.2px;line-height:11px;color:#6a6a6a;letter-spacing:0.3px">Catalog</span>
  <span class="t" id="nav3" style="left:367.5px;top:118px;font-size:7.2px;line-height:11px;color:#6a6a6a;letter-spacing:0.3px">Contact</span>
  <svg style="left:788px;top:114px" width="44" height="18" viewBox="0 0 44 18" fill="none" stroke="#3a3a3a" stroke-width="1" stroke-linecap="round" stroke-linejoin="round"><circle cx="7.7" cy="7.6" r="3.9"/><path d="M10.6 10.6L13.6 13.8"/><path d="M28.2 4.2H37.8Q38.6 4.2 38.6 5V11.6Q38.6 13.8 36.4 13.8H29.6Q27.4 13.8 27.4 11.6V5Q27.4 4.2 28.2 4.2Z"/><path d="M30.2 4.4V5.6Q30.2 8.2 33 8.2Q35.8 8.2 35.8 5.6V4.4"/></svg>
  <!-- banner text -->
  <span class="t" id="ib" style="left:439px;top:400.4px;font-size:26px;line-height:36px;color:#fff;letter-spacing:0.6px">Image banner</span>
  <span class="t" id="sub" style="left:369px;top:443px;font-size:8.6px;line-height:12px;color:#f4f4f4;letter-spacing:0.14px">Give customers details about the banner image(s) or content on the template.</span>
  <div style="left:489px;top:468px;width:68px;height:27px;border:1px solid #f0f0f0"></div>
  <span class="t" id="shop" style="left:489px;top:475.5px;width:68px;text-align:center;font-size:7.8px;line-height:12px;color:#fff;letter-spacing:0.18px;font-weight:bold">Shop all</span>
  <div id="right"></div>
  <span class="t" style="left:885px;top:117.5px;font-size:8.3px;line-height:13.3px;font-weight:bold;color:#2a2c2e">Customize the appearance of<br>your entire online store</span>
  <span class="t p" id="p1" style="top:148.5px">Theme settings control the colors,<br>typography and other common<br>elements of your online store.</span>
  <span class="t p" id="p2" style="top:193px">Depending on the theme, this can<br>include settings for buttons, social<br>media links, checkout, and more.</span>
  <span class="t p" id="p3" style="top:237.2px">When you edit theme settings, the<br>changes apply to your entire online<br>store.</span>
  <span class="t p" id="p4" style="top:274.2px;color:#3f63b5;text-decoration:underline">Learn more about theme settings</span>
<svg id="ui" style="left:0;top:0;pointer-events:none" width="1024" height="569" viewBox="0 0 1024 569" fill="none" stroke-linecap="round" stroke-linejoin="round">
<!-- top bar left partial icon -->
<path d="M-2 49.6H1.2Q1.9 49.6 1.9 50.3V57.4Q1.9 58.1 1.2 58.1H-2" stroke="#3c3f42" stroke-width="1.1"/>
<!-- inspector icon -->
<path d="M605.6 50.4H614.6M605.6 50.4V59" stroke="#2c5cc5" stroke-width="1.1" stroke-dasharray="1.1 1.75" stroke-linecap="butt"/>
<path d="M614.4 50.4V54M605.6 58.8H609.4" stroke="#2c5cc5" stroke-width="1.1" stroke-dasharray="1.1 1.75" stroke-linecap="butt"/>
<path d="M610.6 54.8L615.2 56.8L613.5 57.7L615.4 59.6L614.6 60.4L612.7 58.5L611.8 60Z" fill="#2c5cc5" stroke="#2c5cc5" stroke-width=".5"/>
<!-- desktop icon -->
<path d="M921.6 49.5H930.5Q931.2 49.5 931.2 50.2V55H920.9V50.2Q920.9 49.5 921.6 49.5Z" fill="#55585b"/>
<path d="M920.9 56H931.2V57Q931.2 57.8 930.5 57.8H921.6Q920.9 57.8 920.9 57Z" fill="#7b7e81"/>
<path d="M924.6 58.4H927.6L928.4 59.9H923.8Z" fill="#6a6d70"/>
<!-- undo / redo -->
<path d="M951 51.6Q954.2 49.4 957.4 50.6A4.7 4.7 0 0 1 954.8 59.6" stroke="#44474a" stroke-width="1.15"/>
<path d="M950.4 49.2L950.6 52.6L953.8 52.2" stroke="#44474a" stroke-width="1.15"/>
<path d="M979.6 51.6Q976.4 49.4 973.2 50.6A4.7 4.7 0 0 0 975.8 59.6" stroke="#cfd1d4" stroke-width="1.1"/>
<path d="M980.2 49.2L980 52.6L976.8 52.2" stroke="#cfd1d4" stroke-width="1.1"/>
<!-- left rail partial icons -->
<g transform="translate(-1.2 0)">
<path d="M-1 86.4H2.6V95H-1M-1 89H2.6" stroke="#3c3f42" stroke-width="1.3"/>
<path d="M3.2 84.8v1M3.2 96.2v1" stroke="#3c3f42" stroke-width="1"/>
<path d="M-1 112.2L1.4 113.4L3.6 116.2L1.2 119.6L-1 119Z" fill="#2c6ecb"/>
<circle cx="2.8" cy="120.6" r="1" fill="#2c6ecb"/>
<path d="M-1 136.4H2.2V140H-1ZM-1 141.2H3.4V144.6H-1Z" fill="#3c3f42"/>
<path d="M1.4 133.6H3.6V136" stroke="#3c3f42" stroke-width="1"/>
</g>
<!-- scroll arrows -->
<path d="M172.8 76L174.5 73.9L176.2 76Z" fill="#505050"/>
<path d="M172.8 558.6L174.5 560.7L176.2 558.6Z" fill="#a0a0a0"/>
<path d="M860.4 84.6L862.2 82.5L864 84.6Z" fill="#505050"/>
<path d="M860.4 559.4L862.2 561.5L864 559.4Z" fill="#505050"/>
<path d="M19.4 565.6V568.8L17.6 567.2Z" fill="#a0a0a0"/>
<path d="M164.6 565.6V568.8L166.4 567.2Z" fill="#505050"/>
<!-- favicon stack icon + red box -->
<ellipse cx="153.2" cy="386.2" rx="3.9" ry="1.9" fill="#4f5255"/>
<path d="M149.4 388.4Q153.2 391 157 388.4M149.4 390.4Q153.2 393 157 390.4" stroke="#4f5255" stroke-width="1.1"/>
<rect x="141.1" y="379.5" width="24.8" height="17.2" rx="1" stroke="#cf2027" stroke-width="2"/>
<!-- red arrow -->
<path d="M255.5 477L188 411.7" stroke="#ee1016" stroke-width="2.2" stroke-linecap="butt"/>
<path d="M176.4 400.5L193.3 406L181.6 416.6Z" fill="#ee1016"/>
<!-- paint brush -->
<g fill="#55585b">
<path d="M891.8 89.4L898.3 83.5L901.1 86L900.2 89.2L903.5 88.8L909.4 94.3L902.6 101.1Z"/>
<path d="M889.1 92.2L900.2 102.6Q899 103.8 897 103.2L893.6 102.2Q892.4 102 891.6 103L889.4 106.6Q888 108.4 886 107.4Q884.200 106.2 885.4 104.2L888.8 100.6Q889.600 99.6 889.4 98.4Z"/>
<path d="M907.2 100.6Q909.8 103.6 909.8 105.200A2.600 2.600 0 0 1 904.6 105.2Q904.6 103.6 907.2 100.600Z"/>
</g>
<!-- vify logo -->
<rect x="892.2" y="516.6" width="36.8" height="36.1" rx="4.200" fill="#f7801a"/>
<g stroke="#fffdf5" stroke-width="1.3" stroke-linejoin="miter" stroke-linecap="butt">
<path d="M908.700 543L898.800 522.600H894.400L906.900 548.200L918.500 522.600H927"/>
<path d="M909.400 548.600L915.500 535.400H922.600"/>
<path d="M924.800 528.400H918.300L915.800 534"/>
</g>
<text x="935.200" y="542.900" font-family="'Liberation Sans','DejaVu Sans',sans-serif" font-weight="bold" font-size="24" fill="#f7801a" textLength="70.600" lengthAdjust="spacing">vify.io</text>
</svg>

</div>
</body>
</html>
